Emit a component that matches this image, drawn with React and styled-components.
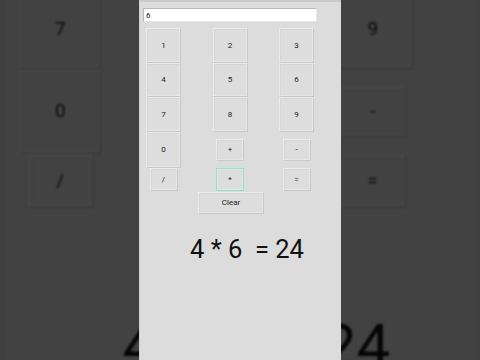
import React from "react";
import styled, { createGlobalStyle, css } from "styled-components";

const GlobalStyle = createGlobalStyle`
  html, body {
    margin: 0;
    padding: 0;
    background: #414141;
    overflow: hidden;
  }
`;

const Stage = styled.div`
  position: relative;
  width: 480px;
  height: 360px;
  overflow: hidden;
  background: #414141;
  display: flex;
  justify-content: center;
  font-family: Roboto, "Liberation Sans", sans-serif;
`;

// blurred, zoomed-in copy of the phone screen behind it
const Backdrop = styled.div`
  position: absolute;
  inset: 0;
  display: flex;
  justify-content: center;
  transform: scale(2.35);
  transform-origin: 240px 178px;
  filter: brightness(0.3) blur(0.5px);
  pointer-events: none;
`;

const Screen = styled.div`
  position: relative;
  width: 202px;
  height: 360px;
  box-sizing: border-box;
  background: #dcdcdc;
  border-top: 2px solid #cacaca;
  border-left: 1px solid #cfcfcf;
  padding: 6px 0 0 3px;
  display: flex;
  flex-direction: column;
`;

const Display = styled.input`
  box-sizing: border-box;
  width: 174px;
  height: 14px;
  margin: 0;
  padding: 0 2px;
  border: 1px solid #b9b9b9;
  border-bottom-color: #e8e8e8;
  border-right-color: #e8e8e8;
  background: #fff;
  font-family: Roboto, "Liberation Sans", sans-serif;
  font-size: 8px;
  color: #111;
  outline: none;
`;

const Keypad = styled.div`
  display: grid;
  grid-template-columns: repeat(3, 35px);
  grid-auto-rows: auto;
  justify-content: space-between;
  justify-items: center;
  align-items: center;
  width: 168px;
  margin: 6px 0 0 3px;
`;

const Key = styled.button`
  box-sizing: border-box;
  width: ${(p) => (p.small ? "28px" : "35px")};
  height: ${(p) => p.h || 34.5}px;
  margin: 0;
  padding: 0;
  background: #dddddd;
  border: 1px solid #eaeaea;
  border-right-color: #c9c9c9;
  border-bottom-color: #c9c9c9;
  box-shadow: inset -1px -1px 0 #e6e6e6, inset 1px 1px 0 #d6d6d6;
  font-family: Roboto, "Liberation Sans", sans-serif;
  font-size: 8px;
  color: #222;
  cursor: pointer;
  ${(p) =>
    p.focused &&
    css`
      border: 1px solid #a9d9c5;
      box-shadow: inset 0 0 0 1px #d6ece3, 0 0 0 1px #c8e6da;
    `}
`;

const ClearKey = styled(Key)`
  width: 66px;
  height: 22px;
  margin: 1px 0 0 55px;
`;

const Result = styled.div`
  margin: 22px 0 0 47px;
  font-size: 25.5px;
  line-height: 26px;
  color: #111;
  white-space: pre;
`;

const keys = [
  { label: "1" },
  { label: "2" },
  { label: "3" },
  { label: "4" },
  { label: "5" },
  { label: "6" },
  { label: "7" },
  { label: "8" },
  { label: "9" },
  { label: "0", h: 36 },
  { label: "+", small: true, h: 22 },
  { label: "-", small: true, h: 22 },
  { label: "/", small: true, h: 23 },
  { label: "*", small: true, h: 23, focused: true },
  { label: "=", small: true, h: 23 },
];

const Calculator = () => (
  <Screen>
    <Display type="text" value="6" readOnly />
    <Keypad>
      {keys.map((k) => (
        <Key
          key={k.label}
          small={k.small}
          h={k.h}
          focused={k.focused}
          tabIndex={-1}
        >
          {k.label}
        </Key>
      ))}
    </Keypad>
    <ClearKey tabIndex={-1}>Clear</ClearKey>
    <Result>{"4 * 6  = 24"}</Result>
  </Screen>
);

const App = () => (
  <Stage>
    <GlobalStyle />
    <Backdrop aria-hidden="true">
      <Calculator />
    </Backdrop>
    <Calculator />
  </Stage>
);

export default App;
